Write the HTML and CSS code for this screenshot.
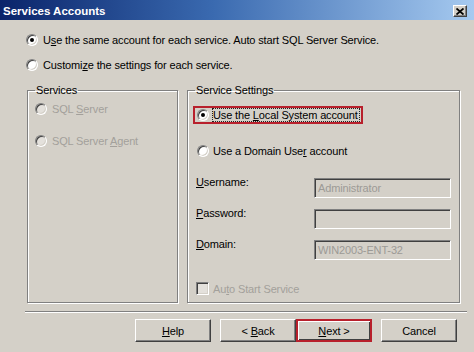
FILE: index.html
```html
<!DOCTYPE html>
<html>
<head>
<meta charset="utf-8">
<link rel="stylesheet" href="styles.css">
</head>
<body>
<div class="window">
  <div class="titlebar">
    <span class="title">Services Accounts</span>
    <span class="close-btn"><svg width="8" height="7" viewBox="0 0 8 7"><path d="M0.5 0.5 L7.5 6.5 M7.5 0.5 L0.5 6.5" stroke="#000" stroke-width="1.8" fill="none"/></svg></span>
  </div>
  <div class="content">
    <div class="opt first"><span class="radio checked"></span><span class="txt">U<u>s</u>e the same account for each service. Auto start SQL Server Service.</span></div>
    <div class="opt second"><span class="radio"></span><span class="txt">Customi<u>z</u>e the settings for each service.</span></div>

    <div class="groups">
      <fieldset class="group services">
        <legend>Services</legend>
        <div class="group-inner services-inner">
          <div class="opt disabled"><span class="radio"></span><span class="txt">SQL <u>S</u>erver</span></div>
          <div class="opt disabled agent"><span class="radio"></span><span class="txt">SQL Server <u>A</u>gent</span></div>
        </div>
      </fieldset>
      <fieldset class="group settings">
        <legend>Service Settings</legend>
        <div class="group-inner settings-inner">
          <div class="highlight-box"><span class="radio checked"></span><span class="txt focus">Use the <u>L</u>ocal System account</span></div>
          <div class="opt domain"><span class="radio"></span><span class="txt">Use a Domain Use<u>r</u> account</span></div>
          <div class="form-row first-row"><span class="flabel"><u>U</u>sername:</span><div class="field">Administrator</div></div>
          <div class="form-row"><span class="flabel"><u>P</u>assword:</span><div class="field"></div></div>
          <div class="form-row"><span class="flabel"><u>D</u>omain:</span><div class="field">WIN2003-ENT-32</div></div>
          <div class="opt disabled check-row"><span class="checkbox"></span><span class="txt">Au<u>t</u>o Start Service</span></div>
        </div>
      </fieldset>
    </div>

    <div class="separator"></div>

    <div class="buttons">
      <button class="btn help"><u>H</u>elp</button>
      <button class="btn back">&lt; <u>B</u>ack</button>
      <button class="btn next"><u>N</u>ext &gt;</button>
      <button class="btn cancel">Cancel</button>
    </div>
  </div>
</div>
</body>
</html>
```

FILE: styles.css
```css
html, body {
  margin: 0;
  padding: 0;
}
body {
  background: #d4d0c8;
  font-family: "Liberation Sans", Arial, sans-serif;
  font-size: 11px;
  letter-spacing: -0.14px;
  color: #000;
  width: 474px;
  height: 352px;
  overflow: hidden;
}
.window {
  width: 474px;
  height: 352px;
  background: #d4d0c8;
}
.titlebar {
  height: 20px;
  display: flex;
  align-items: flex-start;
  justify-content: space-between;
  background: linear-gradient(to right, #0a246a 0%, #3a6ab0 45%, #a6caf0 100%);
}
.title {
  color: #fff;
  font-weight: bold;
  font-size: 11.5px;
  letter-spacing: 0;
  line-height: 18px;
  padding: 2px 0 0 3px;
}
.close-btn {
  width: 14px;
  height: 12px;
  margin: 5px 7px 0 0;
  box-sizing: border-box;
  background: #d4d0c8;
  border: 1px solid;
  border-color: #fff #404040 #404040 #fff;
  box-shadow: inset -1px -1px 0 #808080;
  display: flex;
  align-items: center;
  justify-content: center;
}
.close-btn svg { display: block; }

.content {
  padding: 14px 7px 0 25px;
}
.opt {
  display: flex;
  align-items: center;
  gap: 5px;
  height: 12px;
}
.txt {
  line-height: 12px;
  white-space: nowrap;
}
.opt.first { margin-left: 1px; }
.opt.second { margin: 13px 0 0 1px; }

.radio {
  flex: none;
  position: relative;
  width: 12px;
  height: 12px;
  box-sizing: border-box;
  border-radius: 50%;
  background: #fff;
  border: 1px solid;
  border-color: #808080 #fff #fff #808080;
  box-shadow: inset 1px 1px 0 #404040, inset -1px -1px 0 #d4d0c8;
}
.radio.checked::after {
  content: "";
  position: absolute;
  left: 3px;
  top: 3px;
  width: 4px;
  height: 4px;
  border-radius: 50%;
  background: #000;
}
.disabled .radio,
.disabled .checkbox {
  background: #e4e1dc;
}
.disabled .txt {
  color: #a3a09b;
}
.checkbox {
  flex: none;
  width: 13px;
  height: 13px;
  box-sizing: border-box;
  border: 1px solid;
  border-color: #808080 #fff #fff #808080;
  box-shadow: inset 1px 1px 0 #404040, inset -1px -1px 0 #d4d0c8;
}

.groups {
  display: flex;
  gap: 9px;
  margin: 13px 0 0 2px;
  height: 219px;
  width: 433px;
}
.group {
  margin: 0;
  padding: 0;
  min-width: 0;
  border: 1px solid #808080;
  box-shadow: 1px 1px 0 #fff, inset 1px 1px 0 #fff;
}
.group legend {
  margin-left: 7px;
  padding: 0 1px;
  line-height: 13px;
  white-space: nowrap;
}
.services { width: 151px; box-sizing: border-box; }
.settings { flex: 1; }

.services-inner { padding: 6px 0 0 7px; }
.services-inner .agent { margin-top: 20px; }

.settings-inner { padding: 9px 0 0 5px; }
.highlight-box {
  display: inline-flex;
  align-items: center;
  gap: 3px;
  border: 2px solid #b8202c;
  padding: 0 1px 0 2px;
}
.txt.focus {
  border: 1px dotted #222;
  padding: 0 1px 0 0;
}
.opt.domain {
  margin: 21px 0 0 4px;
  gap: 4px;
}
.form-row {
  display: flex;
  align-items: flex-start;
  margin: 9px 0 0 3px;
}
.form-row.first-row { margin-top: 19px; }
.flabel {
  width: 118px;
  line-height: 12px;
  flex: none;
}
.field {
  margin-top: 2px;
  width: 137px;
  height: 20px;
  box-sizing: border-box;
  border: 1px solid;
  border-color: #808080 #fff #fff #808080;
  box-shadow: inset 1px 1px 0 #404040, inset -1px -1px 0 #d4d0c8;
  background: #d4d0c8;
  color: #9c9a96;
  padding: 3px 0 0 3px;
  line-height: 12px;
  white-space: nowrap;
}
.check-row {
  margin: 22px 0 0 3px;
  height: 13px;
  gap: 4px;
}

.separator {
  margin-top: 8px;
  height: 0;
  border-top: 1px solid #808080;
  border-bottom: 1px solid #fff;
}

.buttons {
  display: flex;
  justify-content: flex-end;
  padding-right: 10px;
  margin-top: 6px;
}
.btn {
  font-family: "Liberation Sans", Arial, sans-serif;
  font-size: 11px;
  letter-spacing: -0.14px;
  color: #000;
  width: 76px;
  height: 23px;
  box-sizing: border-box;
  background: #d4d0c8;
  border: 1px solid;
  border-color: #fff #404040 #404040 #fff;
  box-shadow: inset -1px -1px 0 #808080;
  padding: 0;
  margin: 0;
  line-height: 12px;
}
.btn.help { margin-right: 9px; }
.btn.next {
  border: 2px solid #b8202c;
  box-shadow: inset 1px 1px 0 #fff, inset -1px -1px 0 #404040;
}
.btn.cancel { margin-left: 9px; }
```
